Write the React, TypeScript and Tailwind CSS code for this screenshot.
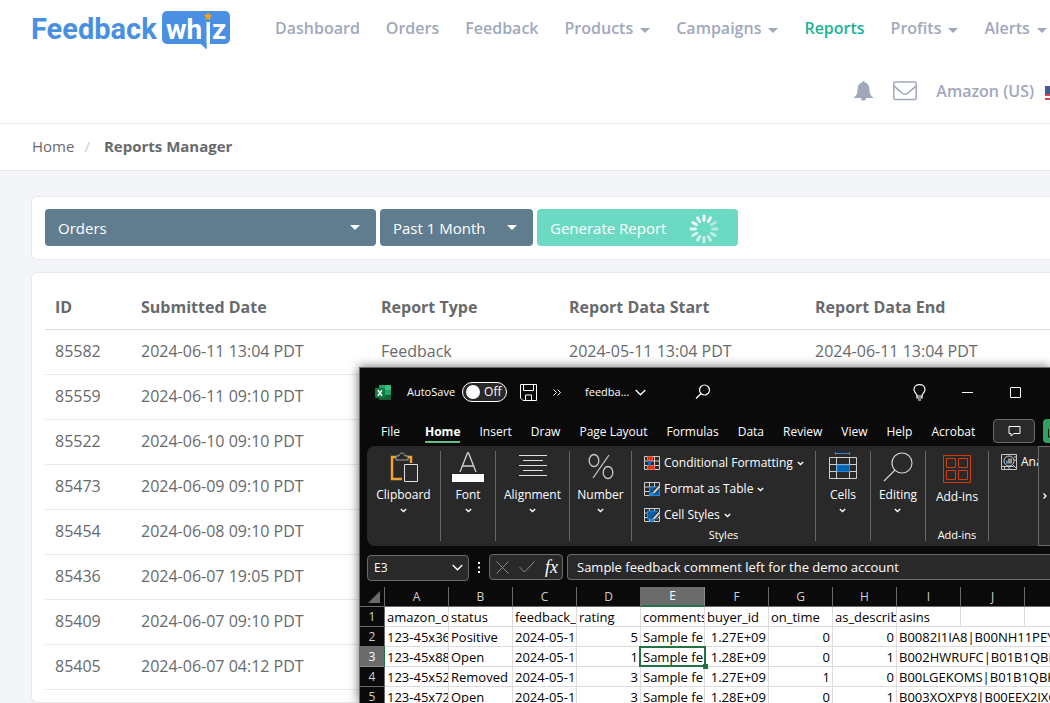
import { FC, ReactNode } from 'react';
import { clsx } from 'clsx';

const navItems = [
  { label: 'Dashboard' },
  { label: 'Orders' },
  { label: 'Feedback' },
  { label: 'Products', menu: true },
  { label: 'Campaigns', menu: true },
  { label: 'Reports', active: true },
  { label: 'Profits', menu: true },
  { label: 'Alerts', menu: true },
];

const reports = [
  { id: '85582', submitted: '2024-06-11 13:04 PDT', type: 'Feedback', start: '2024-05-11 13:04 PDT', end: '2024-06-11 13:04 PDT' },
  { id: '85559', submitted: '2024-06-11 09:10 PDT' },
  { id: '85522', submitted: '2024-06-10 09:10 PDT' },
  { id: '85473', submitted: '2024-06-09 09:10 PDT' },
  { id: '85454', submitted: '2024-06-08 09:10 PDT' },
  { id: '85436', submitted: '2024-06-07 19:05 PDT' },
  { id: '85409', submitted: '2024-06-07 09:10 PDT' },
  { id: '85405', submitted: '2024-06-07 04:12 PDT' },
];

const sheetColumns = ['A', 'B', 'C', 'D', 'E', 'F', 'G', 'H', 'I', 'J', 'K'];

const sheetRows = [
  ['amazon_o', 'status', 'feedback_', 'rating', 'comments', 'buyer_id', 'on_time', 'as_describ', 'asins'],
  ['123-45x369', 'Positive', '2024-05-10', '5', 'Sample fe', '1.27E+09', '0', '0', 'B0082I1IA8|B00NH11PEY'],
  ['123-45x883', 'Open', '2024-05-10', '1', 'Sample fe', '1.28E+09', '0', '1', 'B002HWRUFC|B01B1QBK'],
  ['123-45x528', 'Removed', '2024-05-10', '3', 'Sample fe', '1.27E+09', '1', '0', 'B00LGEKOMS|B01B1QBKT'],
  ['123-45x724', 'Open', '2024-05-10', '3', 'Sample fe', '1.28E+09', '0', '1', 'B003XOXPY8|B00EEX2IXO'],
];

const Caret: FC<{ className?: string }> = ({ className }) => (
  <svg className={className} width="10" height="5" viewBox="0 0 10 5" fill="currentColor">
    <path d="M0 0h10L5 5z" />
  </svg>
);

const Chevron: FC<{ big?: boolean }> = ({ big }) => (
  <svg
    width={big ? 11 : 7}
    height={big ? 7 : 5}
    viewBox={big ? '0 0 11 7' : '0 0 7 5'}
    fill="none"
    stroke="currentColor"
    strokeWidth="1.3"
    className="shrink-0"
  >
    <path d={big ? 'M.7 1l4.8 4.8L10.300 1' : 'M.8 1l2.700 2.500L6.200 1'} />
  </svg>
);

const Logo: FC = () => (
  <svg width="199" height="40" viewBox="0 0 199 40" role="img" aria-label="Feedback Whiz">
    <text x="-1" y="29" fill="#4a90e2" fontFamily="Roboto, sans-serif" fontWeight="700" fontSize="29">
      Feedback
    </text>
    <path d="M135 1h58a5 5 0 0 1 5 5v23a5 5 0 0 1-5 5h-18v5l-6-5h-34a5 5 0 0 1-5-5V6a5 5 0 0 1 5-5z" fill="#4a90e2" />
    <text x="134" y="29" fill="#fff" fontFamily="Roboto, sans-serif" fontWeight="700" fontSize="28">
      wh
    </text>
    <path d="M174.500 12h3.500v27h-3.500z" fill="#fff" />
    <path d="M169 34h5.500v5.500z" fill="#4a90e2" />
    <text x="180" y="29" fill="#fff" fontFamily="Roboto, sans-serif" fontWeight="700" fontSize="28">
      z
    </text>
    <path d="M176 2l1.300 2.700 3 .4-2.200 2.100.6 3-2.700-1.500-2.700 1.500.6-3-2.200-2.100 3-.4z" fill="#f5a11b" />
  </svg>
);

const Spinner: FC = () => (
  <svg width="30" height="30" viewBox="-15 -15 30 30" stroke="#fff" strokeWidth="2.800" strokeLinecap="round">
    {Array.from({ length: 12 }, (_, i) => (
      <line key={i} y1="-8.500" y2="-13" transform={`rotate(${i * 30})`} opacity={i < 2 ? 1 : 0.35 + i * 0.055} />
    ))}
  </svg>
);

const Header: FC = () => (
  <header className="h-[124px] border-b border-[#e7eaec] bg-white pl-8 text-base font-semibold text-[#a0a8bc]">
    <div className="flex h-[56px] items-center">
      <a href="#" className="mt-1 shrink-0">
        <Logo />
      </a>
      <nav className="ml-11 flex shrink-0 gap-[26px]">
        {navItems.map((item) => (
          <a key={item.label} href="#" className={clsx('flex items-center gap-[7px]', item.active && 'text-[#1ab394]')}>
            {item.label}
            {item.menu && <Caret className="mt-1" />}
          </a>
        ))}
      </nav>
    </div>
    <div className="flex h-[70px] items-center justify-end">
      <button aria-label="Notifications">
        <svg width="19" height="20" viewBox="0 0 19 20" fill="currentColor">
          <path d="M9.500 0c.9 0 1.300.6 1.300 1.400 3 .6 4.400 3 4.500 6 .1 4.500 1.200 7.200 3.700 8.800v.8h-7c0 1.600-1 2.800-2.500 2.800S7 18.600 7 17H0v-.8c2.500-1.600 3.600-4.300 3.700-8.800.1-3 1.500-5.400 4.500-6C8.200.6 8.600 0 9.500 0z" />
        </svg>
      </button>
      <button aria-label="Messages" className="ml-5">
        <svg width="24" height="20" viewBox="0 0 24 20" fill="none" stroke="currentColor" strokeWidth="1.500">
          <rect x=".8" y="1" width="22.400" height="17.500" rx="1.500" />
          <path d="M1 5c3 2.700 5.500 5 8 7 2 1.700 4 1.700 6 0 2.500-2 5-4.300 8-7" />
        </svg>
      </button>
      <a href="#" className="ml-[19px]">
        Amazon (US)
      </a>
      <svg className="-mr-[15px] ml-[11px] mt-1" width="20" height="14" viewBox="0 0 20 14">
        <rect width="20" height="14" fill="#fff" />
        <path d="M0 1h20M0 5h20M0 9h20M0 13h20" stroke="#e0424b" strokeWidth="2" />
        <rect width="9" height="8" fill="#3f5b98" />
      </svg>
    </div>
  </header>
);

interface PickerProps {
  label: string;
  value: string;
  className: string;
}

const Picker: FC<PickerProps> = ({ label, value, className }) => (
  <div className={clsx('relative h-[37px] text-white', className)}>
    <select aria-label={label} className="h-full w-full appearance-none rounded bg-[#607d8f] px-[13px] pt-0.5 text-[15px]">
      <option>{value}</option>
    </select>
    <Caret className="pointer-events-none absolute right-4 top-4" />
  </div>
);

const ReportsTable: FC = () => (
  <table className="w-full table-fixed text-left text-base text-[#676a6c]">
    <thead>
      <tr className="h-[44px] border-b border-[#dddddd]">
        <th className="w-[86px] px-2.5 font-bold">ID</th>
        <th className="w-[240px] px-2.5 font-bold">Submitted Date</th>
        <th className="w-[188px] px-2.5 font-bold">Report Type</th>
        <th className="w-[246px] px-2.5 font-bold">Report Data Start</th>
        <th className="px-2.5 font-bold">Report Data End</th>
      </tr>
    </thead>
    <tbody>
      {reports.map((report) => (
        <tr key={report.id} className="h-[45px] border-b border-[#e7eaec]">
          <td className="px-2.5 pb-0.5">{report.id}</td>
          <td className="px-2.5 pb-0.5">{report.submitted}</td>
          <td className="px-2.5 pb-0.5">{report.type}</td>
          <td className="px-2.5 pb-0.5">{report.start}</td>
          <td className="px-2.5 pb-0.5">{report.end}</td>
        </tr>
      ))}
    </tbody>
  </table>
);

const TitleBar: FC = () => (
  <div className="flex h-[50px] items-center pb-0.5 pl-[15px] pr-[29px] text-[11px]">
    <svg width="17" height="17" viewBox="0 0 17 17">
      <path d="M4 1h6v5H4z" fill="#21a366" />
      <path d="M10 1h5.500l.5.500V6h-6z" fill="#33c481" />
      <path d="M4 6h6v5H4z" fill="#107c41" />
      <path d="M10 6h6v5h-6z" fill="#21a366" />
      <path d="M4 11h12v5H4z" fill="#185c37" />
      <rect y="4" width="10" height="10" rx="1" fill="#107c41" />
      <path d="M2.800 6.300l4.200 5.500M7 6.300l-4.200 5.500" stroke="#fff" strokeWidth="1.500" />
    </svg>
    <label htmlFor="autosave" className="ml-[15px]">
      AutoSave
    </label>
    <div className="relative ml-[7px] flex h-5 w-[45px] items-center rounded-full border border-white bg-[#292929]">
      <input id="autosave" type="checkbox" role="switch" className="absolute inset-0 appearance-none" />
      <span className="ml-[3px] size-[14px] rounded-full bg-white" />
      <span className="ml-1 text-xs">Off</span>
    </div>
    <button aria-label="Save" className="ml-[13px]">
      <svg width="17" height="17" viewBox="0 0 17 17" fill="none" stroke="#fff">
        <path d="M.5.5h16v16H3L.5 14zM3.500.5v6h10v-6M5.500 16v-5h6v5" />
      </svg>
    </button>
    <button aria-label="More commands" className="ml-4">
      <svg width="8" height="7" viewBox="0 0 8 7" fill="none" stroke="#fff">
        <path d="M.5.5l3 3-3 3M4.500.5l3 3-3 3" />
      </svg>
    </button>
    <button className="ml-6 flex items-center gap-1.5">
      feedba...
      <Chevron big />
    </button>
    <button aria-label="Search" className="ml-[49px]">
      <svg width="16" height="16" viewBox="0 0 16 16" fill="none" stroke="#fff" strokeWidth="1.200">
        <circle cx="9.500" cy="6" r="5" />
        <path d="M6 9.500L1 14.500" />
      </svg>
    </button>
    <button aria-label="Tips" className="ml-auto">
      <svg width="13" height="17" viewBox="0 0 13 17" fill="none" stroke="#fff" strokeWidth="1.200">
        <path d="M4 12c0-2.500-3-3.300-3-6.500C1 2.500 3.500.6 6.500.6S12 2.500 12 5.500c0 3.200-3 4-3 6.500zM4 12v2h5v-2M5 16h3" />
      </svg>
    </button>
    <button aria-label="Minimize" className="ml-9 h-px w-[11px] bg-white" />
    <button aria-label="Maximize" className="ml-[37px] size-[11px] rounded-[1px] border border-white" />
  </div>
);

const tabs = ['File', 'Home', 'Insert', 'Draw', 'Page Layout', 'Formulas', 'Data', 'Review', 'View', 'Help', 'Acrobat'];

const RibbonTabs: FC = () => (
  <div className="flex h-[28px] items-start pl-[21px] text-xs">
    <nav className="flex shrink-0 gap-[19px] pt-[5px]">
      {tabs.map((tab) => (
        <button
          key={tab}
          className={clsx(
            'h-5 border-b-2 first:mr-1.5',
            tab === 'Home' ? 'border-[#5fbf86] font-bold' : 'border-transparent'
          )}
        >
          {tab}
        </button>
      ))}
    </nav>
    <button
      aria-label="Comments"
      className="ml-auto mt-px flex h-6 w-[42px] shrink-0 items-center justify-center rounded border border-[#6b6b6b] bg-[#292929]"
    >
      <svg width="13" height="12" viewBox="0 0 13 12" fill="none" stroke="#fff">
        <path d="M1 1.500h11v7H6l-3 2.500V8.500H1z" />
      </svg>
    </button>
    <button aria-label="Share" className="ml-2 mt-px h-6 w-[7px] shrink-0 overflow-hidden rounded-l bg-[#33a161]">
      <svg width="7" height="24" viewBox="0 0 7 24" fill="none" stroke="#111">
        <path d="M5.500 10v8H9" />
      </svg>
    </button>
  </div>
);

interface GroupProps {
  width: string;
  label: string;
  icon: ReactNode;
  footer?: string;
}

const Group: FC<GroupProps> = ({ width, label, icon, footer }) => (
  <div className={clsx('flex h-[90px] shrink-0 flex-col items-center border-r border-[#666666]', width)}>
    <div className={clsx('flex items-start pt-px', footer ? 'h-[37px]' : 'h-[35px]')}>{icon}</div>
    <button className="flex flex-col items-center gap-1 leading-[18px]">
      {label}
      {!footer && <Chevron />}
    </button>
    {footer && <span className="mt-auto text-[11px] leading-3">{footer}</span>}
  </div>
);

const grid = 'M.5.500h15v13H.5zM.5 5h15M.5 9.500h15M5.500.5v13M10.500.5v13';

const Brush: FC = () => (
  <>
    <path d="M15.500 4.500L8 12" stroke="#292929" strokeWidth="4" />
    <path d="M15.500 4.500L9 11.500" stroke="#d0d0d0" strokeWidth="2" />
    <path d="M8 10c2 0 3 2 1 3.500-1 1-3 1-4 .5 1.500-1 1-4 3-4z" fill="#2b88d8" />
  </>
);

const styleCommands = [
  {
    label: 'Conditional Formatting',
    icon: (
      <>
        <path d={grid} fill="none" stroke="#d0d0d0" />
        <path d="M3.500.5h5v4h-5zM3.500 9.500h7v4h-7z" fill="#d83b01" stroke="#ff5f5f" />
        <path d="M4 5h3v4.500H4z" fill="#0f6cbd" />
      </>
    ),
  },
  {
    label: 'Format as Table',
    icon: (
      <>
        <path d={grid} fill="none" stroke="#d0d0d0" />
        <path d="M5.500 5h10v8.500h-10z" fill="#0063b1" stroke="#2b88d8" />
        <Brush />
      </>
    ),
  },
  {
    label: 'Cell Styles',
    icon: (
      <>
        <path d={grid} fill="none" stroke="#d0d0d0" />
        <path d="M3.500 3h10v8h-10z" fill="#0063b1" stroke="#2b88d8" />
        <Brush />
      </>
    ),
  },
];

const Ribbon: FC = () => (
  <div className="flex">
    <div className="ml-[7px] flex h-[100px] min-w-0 flex-1 overflow-hidden rounded-l-lg bg-[#292929] pt-[5px] text-xs">
      <Group
        width="w-[74px]"
        label="Clipboard"
        icon={
          <svg width="28" height="30" viewBox="0 0 28 30" fill="none">
            <path d="M12 27H2V5h19v6" stroke="#f0a22e" strokeWidth="2.500" />
            <path d="M6 8V4h3c0-4 6-4 6 0h3v4z" fill="#292929" stroke="#a0a0a0" />
            <path d="M14.500 12.500h13v17h-13z" fill="#292929" stroke="#e0e0e0" />
          </svg>
        }
      />
      <Group
        width="w-[55px]"
        label="Font"
        icon={
          <svg width="32" height="30" viewBox="0 0 32 30" fill="none">
            <path d="M8 20L15.500 1h1L24 20M10.500 14h11" stroke="#d0d0d0" strokeWidth="1.300" />
            <path d="M0 22h32v8H0z" fill="#fff" />
          </svg>
        }
      />
      <Group
        width="w-[74px]"
        label="Alignment"
        icon={
          <svg width="28" height="30" viewBox="0 0 28 30" stroke="#e0e0e0">
            <path d="M0 3.500h28M4 8.500h20M0 13.500h28M4 18.500h20M0 23.500h28" />
          </svg>
        }
      />
      <Group
        width="w-[62px]"
        label="Number"
        icon={
          <svg width="26" height="30" viewBox="0 0 26 30" fill="none" stroke="#c8c8c8" strokeWidth="1.300">
            <ellipse cx="6" cy="8.500" rx="4.800" ry="6" />
            <ellipse cx="20" cy="20.500" rx="4.800" ry="6" />
            <path d="M21 3L5 26" />
          </svg>
        }
      />
      <div className="flex h-[90px] w-[184px] shrink-0 flex-col border-r border-[#666666] pl-3">
        {styleCommands.map((command) => (
          <button key={command.label} className="flex h-[26px] items-center gap-1 pb-0.5">
            <svg width="16" height="15" viewBox="0 0 16 15">
              {command.icon}
            </svg>
            {command.label}
            <Chevron />
          </button>
        ))}
        <span className="mt-auto pr-3 text-center text-[11px] leading-3">Styles</span>
      </div>
      <Group
        width="w-[55px]"
        label="Cells"
        icon={
          <svg width="28" height="30" viewBox="0 0 28 30" fill="none">
            <path d="M6 1.500h15M6.500 0v3M20.500 0v3" stroke="#2b88d8" />
            <path d="M.5 5.500h27v21H.5zM.5 12.500h27M.5 19.500h27M7.500 5.500v21M20.500 5.500v21" stroke="#d0d0d0" />
            <path d="M8 13h12.500v6.500H8z" fill="#0063b1" stroke="#2b88d8" />
          </svg>
        }
      />
      <Group
        width="w-[55px]"
        label="Editing"
        icon={
          <svg width="30" height="30" viewBox="0 0 30 30" fill="none" stroke="#d0d0d0" strokeWidth="1.200">
            <circle cx="19" cy="11" r="10" />
            <path d="M12 18L1 29" />
          </svg>
        }
      />
      <Group
        width="w-[63px]"
        label="Add-ins"
        footer="Add-ins"
        icon={
          <svg className="mt-[3px]" width="28" height="28" viewBox="0 0 28 28" fill="none" stroke="#d83b01">
            <path d="M.5.5h27v27H.5zM3.500 3.500h9v9h-9zM15.500 3.500h9v9h-9zM3.500 15.500h9v9h-9zM15.500 15.500h9v9h-9z" />
          </svg>
        }
      />
      <button className="flex h-[22px] shrink-0 items-center gap-1 whitespace-nowrap pl-3">
        <svg width="16" height="16" viewBox="0 0 16 16" fill="none" stroke="#c8c8c8">
          <path d="M.5.500h15v15H.5zM.5 12.500h12M3.500 12v3M8 12v3M13 3h2M13 6h2" />
          <circle cx="8" cy="7" r="5" fill="#292929" />
          <path d="M12 11l4 4" />
          <path d="M6 9.500V7M8 9.500v-5M10 9.500v-5" stroke="#fff" />
          <path d="M6 9.500V6.500" stroke="#2b88d8" strokeWidth="1.500" />
        </svg>
        Ana
      </button>
    </div>
    <button
      aria-label="Scroll ribbon"
      className="flex h-[100px] w-3 shrink-0 items-center justify-center border border-r-0 border-[#6b6b6b] bg-[#292929]"
    >
      <svg width="4" height="6" viewBox="0 0 4 6" fill="none" stroke="#fff" strokeWidth="1.300">
        <path d="M.5.5L3 3 .5 5.500" />
      </svg>
    </button>
  </div>
);

const FormulaBar: FC = () => (
  <div className="mt-2 flex h-[26px] items-center pl-[7px]">
    <div className="relative h-full w-[102px] shrink-0">
      <input
        aria-label="Name box"
        defaultValue="E3"
        className="h-full w-full rounded border border-[#6b6b6b] bg-[#292929] px-1.5 text-xs"
      />
      <span className="pointer-events-none absolute right-1.5 top-2.5">
        <Chevron big />
      </span>
    </div>
    <svg className="mx-[9px] shrink-0" width="2" height="11" viewBox="0 0 2 11" fill="#fff">
      <path d="M0 0h2v2H0zM0 4.500h2v2H0zM0 9h2v2H0z" />
    </svg>
    <div className="flex h-full w-[74px] shrink-0 items-center justify-between rounded border border-[#6b6b6b] bg-[#292929] pl-1.5 pr-1">
      <button aria-label="Cancel">
        <svg width="13" height="13" viewBox="0 0 13 13" stroke="#8a8a8a">
          <path d="M.5.5l12 12M12.500.5l-12 12" />
        </svg>
      </button>
      <button aria-label="Enter">
        <svg width="16" height="12" viewBox="0 0 16 12" fill="none" stroke="#8a8a8a">
          <path d="M.5 6l5 5L15.500.5" />
        </svg>
      </button>
      <button className="font-['Liberation_Serif',serif] text-lg italic leading-none">fx</button>
    </div>
    <input
      aria-label="Formula bar"
      defaultValue="Sample feedback comment left for the demo account"
      className="ml-1 h-full min-w-0 flex-1 rounded-l border border-r-0 border-[#6b6b6b] bg-[#292929] px-[9px] text-[13px]"
    />
  </div>
);

const Sheet: FC = () => (
  <table className="mt-[7px] w-[729px] table-fixed border-separate border-spacing-0 bg-white text-[13px] leading-[18px] text-black">
    <thead>
      <tr className="h-5 bg-[#0a0a0a] text-xs text-[#d0d0d0]">
        <th className="w-[25px] border-b border-r border-[#6b6b6b] p-0">
          <svg className="ml-auto mr-1" width="12" height="12" viewBox="0 0 12 12" fill="#6b6b6b">
            <path d="M12 0v12H0z" />
          </svg>
        </th>
        {sheetColumns.map((column) => (
          <th
            key={column}
            className={clsx(
              'w-16 border-r p-0 font-normal',
              column === 'E' ? 'border-b-2 border-b-[#217346] border-r-[#8a8a8a] bg-[#6b6b6b] text-white' : 'border-b border-[#6b6b6b]'
            )}
          >
            {column}
          </th>
        ))}
      </tr>
    </thead>
    <tbody>
      {sheetRows.map((row, r) => (
        <tr key={r} className="h-5">
          <th
            className={clsx(
              'border-b border-r p-0 text-xs font-normal',
              r === 2
                ? 'border-b-[#8a8a8a] border-r-[#217346] bg-[#6b6b6b] text-white'
                : 'border-[#6b6b6b] bg-[#0a0a0a] text-[#d0d0d0]'
            )}
          >
            {r + 1}
          </th>
          {row.map((cell, c) => (
            <td
              key={c}
              colSpan={c === 8 && r > 0 ? 3 : 1}
              className={clsx('border-b border-r border-[#dcdcdc] p-0', r === 2 && c === 4 && 'relative')}
            >
              <div
                className={clsx(
                  'overflow-hidden whitespace-nowrap px-0.5',
                  r > 0 && [3, 5, 6, 7].includes(c) && 'text-right'
                )}
              >
                {cell}
              </div>
              {r === 2 && c === 4 && (
                <div className="absolute -inset-x-0.5 -inset-y-px border-2 border-[#217346]">
                  <span className="absolute -bottom-1 -right-1 size-[5px] bg-[#217346]" />
                </div>
              )}
            </td>
          ))}
          {r === 0 && (
            <>
              <td className="border-b border-r border-[#dcdcdc]" />
              <td className="border-b border-r border-[#dcdcdc]" />
            </>
          )}
        </tr>
      ))}
    </tbody>
  </table>
);

const SpreadsheetWindow: FC = () => (
  <section className="absolute bottom-0 left-[359px] right-0 top-[367px] overflow-hidden border-l border-t border-[#6b6b6b] bg-[#0a0a0a] font-['Open_Sans',sans-serif] text-white shadow-[0_0_10px_rgba(0,0,0,0.6)]">
    <TitleBar />
    <RibbonTabs />
    <Ribbon />
    <FormulaBar />
    <Sheet />
  </section>
);

export default function App() {
  return (
    <div className="relative h-screen overflow-hidden bg-[#f3f5f9] font-['Open_Sans',sans-serif]">
      <Header />
      <nav className="flex h-[47px] items-center border-b border-[#e7eaec] bg-white pb-0.5 pl-8 text-[15px] text-[#676a6c]">
        <a href="#">Home</a>
        <span className="ml-2.5 mr-3.5 text-[#cccccc]">/</span>
        <strong>Reports Manager</strong>
      </nav>
      <main className="flex flex-col gap-3 pl-[31px] pt-[25px]">
        <div className="flex gap-1 rounded-l-md border border-r-0 border-[#e7eaec] bg-white px-[13px] pb-[13px] pt-3">
          <Picker label="Report type" value="Orders" className="w-[331px]" />
          <Picker label="Date range" value="Past 1 Month" className="w-[153px]" />
          <button className="flex h-[37px] w-[201px] items-center justify-between rounded bg-[#6cdac3] pl-[13px] pr-[19px] pt-0.5 text-[15px] text-white">
            Generate Report
            <Spinner />
          </button>
        </div>
        <div className="rounded-l-md border border-r-0 border-[#e7eaec] bg-white p-3 pl-[13px] pr-0">
          <ReportsTable />
        </div>
      </main>
      <SpreadsheetWindow />
    </div>
  );
}
